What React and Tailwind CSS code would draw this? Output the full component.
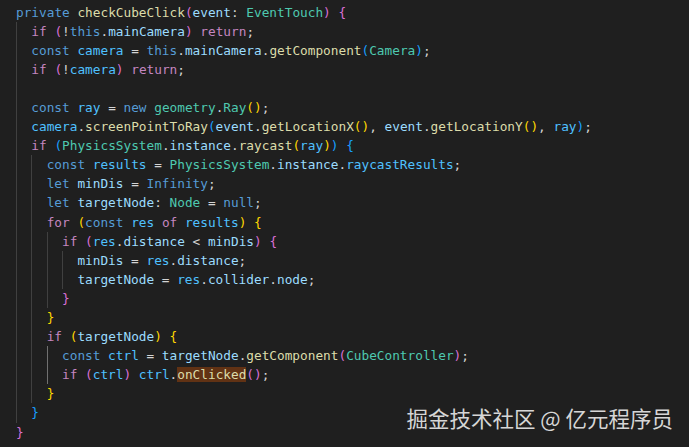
const tone = {
  k: "text-[#569cd6]",
  c: "text-[#c586c0]",
  v: "text-[#9cdcfe]",
  n: "text-[#4fc1ff]",
  f: "text-[#dcdcaa]",
  t: "text-[#4ec9b0]",
  p: "text-[#d4d4d4]",
  g: "text-[#ffd700]",
  o: "text-[#da70d6]",
  b: "text-[#179fff]",
  h: "text-[#dcdcaa] bg-[#613214]",
};

// [guides, tokens, active guide]
const lines = [
  [0, [["k", "private"], ["p", " "], ["f", "checkCubeClick"], ["o", "("], ["v", "event"], ["p", ": "], ["t", "EventTouch"], ["o", ")"], ["p", " "], ["o", "{"]]],
  [1, [["c", "if"], ["p", " "], ["o", "("], ["p", "!"], ["k", "this"], ["p", "."], ["v", "mainCamera"], ["o", ")"], ["p", " "], ["c", "return"], ["p", ";"]]],
  [1, [["k", "const"], ["p", " "], ["n", "camera"], ["p", " = "], ["k", "this"], ["p", "."], ["v", "mainCamera"], ["p", "."], ["f", "getComponent"], ["b", "("], ["t", "Camera"], ["b", ")"], ["p", ";"]]],
  [1, [["c", "if"], ["p", " "], ["o", "("], ["p", "!"], ["n", "camera"], ["o", ")"], ["p", " "], ["c", "return"], ["p", ";"]]],
  [1, []],
  [1, [["k", "const"], ["p", " "], ["n", "ray"], ["p", " = "], ["k", "new"], ["p", " "], ["t", "geometry"], ["p", "."], ["t", "Ray"], ["g", "()"], ["p", ";"]]],
  [1, [["n", "camera"], ["p", "."], ["f", "screenPointToRay"], ["b", "("], ["v", "event"], ["p", "."], ["f", "getLocationX"], ["g", "()"], ["p", ", "], ["v", "event"], ["p", "."], ["f", "getLocationY"], ["g", "()"], ["p", ", "], ["n", "ray"], ["b", ")"], ["p", ";"]]],
  [1, [["c", "if"], ["p", " "], ["b", "("], ["t", "PhysicsSystem"], ["p", "."], ["v", "instance"], ["p", "."], ["f", "raycast"], ["g", "("], ["n", "ray"], ["g", ")"], ["b", ")"], ["p", " "], ["b", "{"]]],
  [2, [["k", "const"], ["p", " "], ["n", "results"], ["p", " = "], ["t", "PhysicsSystem"], ["p", "."], ["v", "instance"], ["p", "."], ["n", "raycastResults"], ["p", ";"]]],
  [2, [["k", "let"], ["p", " "], ["v", "minDis"], ["p", " = "], ["k", "Infinity"], ["p", ";"]]],
  [2, [["k", "let"], ["p", " "], ["v", "targetNode"], ["p", ": "], ["t", "Node"], ["p", " = "], ["k", "null"], ["p", ";"]]],
  [2, [["c", "for"], ["p", " "], ["g", "("], ["k", "const"], ["p", " "], ["n", "res"], ["p", " "], ["c", "of"], ["p", " "], ["n", "results"], ["g", ")"], ["p", " "], ["g", "{"]]],
  [3, [["c", "if"], ["p", " "], ["o", "("], ["n", "res"], ["p", "."], ["v", "distance"], ["p", " < "], ["v", "minDis"], ["o", ")"], ["p", " "], ["o", "{"]]],
  [4, [["v", "minDis"], ["p", " = "], ["n", "res"], ["p", "."], ["v", "distance"], ["p", ";"]]],
  [4, [["v", "targetNode"], ["p", " = "], ["n", "res"], ["p", "."], ["v", "collider"], ["p", "."], ["v", "node"], ["p", ";"]]],
  [3, [["o", "}"]]],
  [2, [["g", "}"]]],
  [2, [["c", "if"], ["p", " "], ["g", "("], ["v", "targetNode"], ["g", ")"], ["p", " "], ["g", "{"]]],
  [3, [["k", "const"], ["p", " "], ["n", "ctrl"], ["p", " = "], ["v", "targetNode"], ["p", "."], ["f", "getComponent"], ["o", "("], ["t", "CubeController"], ["o", ")"], ["p", ";"]], true],
  [3, [["c", "if"], ["p", " "], ["o", "("], ["n", "ctrl"], ["o", ")"], ["p", " "], ["n", "ctrl"], ["p", "."], ["h", "onClicked"], ["o", "()"], ["p", ";"]], true],
  [2, [["g", "}"]]],
  [1, [["b", "}"]]],
  [0, [["o", "}"]]],
];

const CodeLine = ({ guides, tokens, active }) => (
  <div className="flex h-[19.1px]">
    {Array.from({ length: guides }).map((_, i) => (
      <div
        key={i}
        className={
          active && i === 2
            ? "w-[2ch] shrink-0 border-l border-[#707070]"
            : "w-[2ch] shrink-0 border-l border-[#404040]"
        }
      />
    ))}
    <span className="whitespace-pre">
      {tokens.map(([kind, text], i) => (
        <span key={i} className={tone[kind]}>
          {text}
        </span>
      ))}
    </span>
  </div>
);

export default function App() {
  return (
    <div className="relative w-[689px] h-[447px] overflow-hidden bg-[#1f1f1f]">
      <div className="pl-[16px] pt-[2.5px] font-['DejaVu_Sans_Mono',monospace] text-[12.75px] leading-[19.1px]">
        {lines.map(([guides, tokens, active], i) => (
          <CodeLine key={i} guides={guides} tokens={tokens} active={active} />
        ))}
      </div>

      {/* watermark */}
      <div className="absolute right-[16px] top-[407px] font-['Noto_Sans_CJK_SC',sans-serif] text-[21.5px] leading-none text-[#d6d6d6] whitespace-pre">
        掘金技术社区 @ 亿元程序员
      </div>
    </div>
  );
}
